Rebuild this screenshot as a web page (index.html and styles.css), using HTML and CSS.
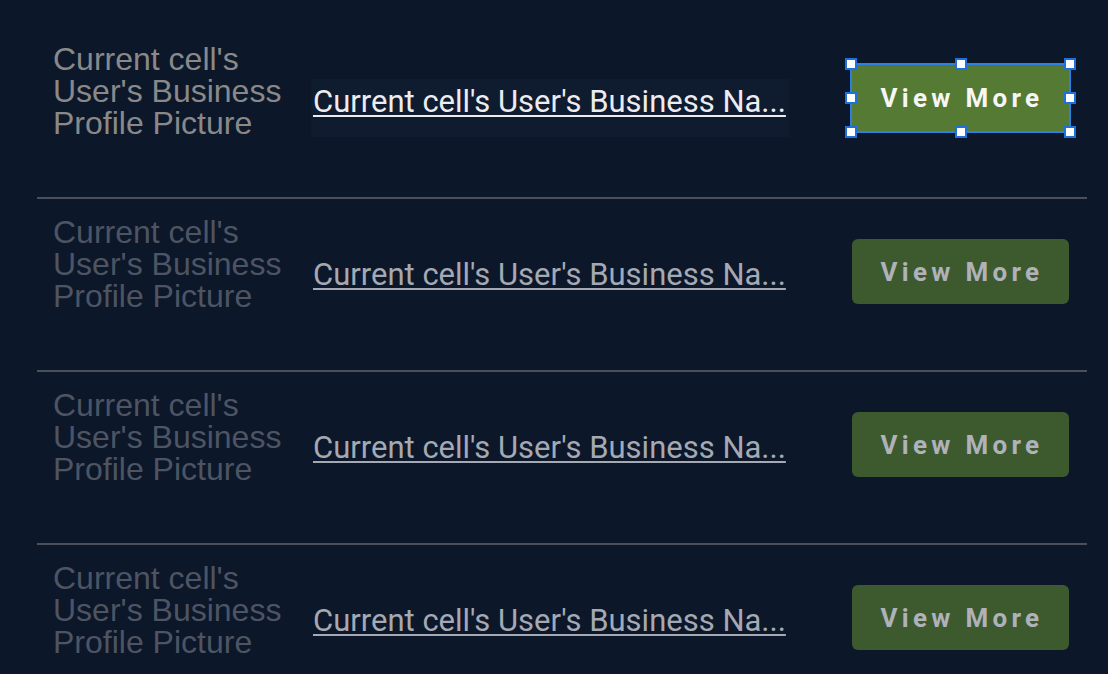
FILE: index.html
```html
<!DOCTYPE html>
<html>
<head>
<meta charset="utf-8">
<link rel="stylesheet" href="styles.css">
</head>
<body>
<div class="list">
  <div class="row">
    <div class="pic">Current cell's<br>User's Business<br>Profile Picture</div>
    <div class="name name-hl"><a class="link">Current cell's User's Business Na...</a></div>
    <div class="btn-wrap">
      <button class="btn">View More</button>
      <div class="sel"></div>
      <span class="h h-tl"></span><span class="h h-tc"></span><span class="h h-tr"></span>
      <span class="h h-ml"></span><span class="h h-mr"></span>
      <span class="h h-bl"></span><span class="h h-bc"></span><span class="h h-br"></span>
    </div>
  </div>
  <div class="row dim">
    <div class="pic">Current cell's<br>User's Business<br>Profile Picture</div>
    <div class="name"><a class="link">Current cell's User's Business Na...</a></div>
    <div class="btn-wrap"><button class="btn">View More</button></div>
  </div>
  <div class="row dim">
    <div class="pic">Current cell's<br>User's Business<br>Profile Picture</div>
    <div class="name"><a class="link">Current cell's User's Business Na...</a></div>
    <div class="btn-wrap"><button class="btn">View More</button></div>
  </div>
  <div class="row dim">
    <div class="pic">Current cell's<br>User's Business<br>Profile Picture</div>
    <div class="name"><a class="link">Current cell's User's Business Na...</a></div>
    <div class="btn-wrap"><button class="btn">View More</button></div>
  </div>
</div>
</body>
</html>
```
FILE: styles.css
```css
html, body {
  margin: 0;
  padding: 0;
  background: #0c1729;
  overflow: hidden;
}
body {
  padding-top: 26px;
  height: 674px;
  box-sizing: border-box;
}
.list {
  margin-left: 37px;
  width: 1050px;
}
.row {
  display: flex;
  align-items: flex-start;
  height: 171px;
  border-bottom: 2px solid #4a4f59;
}
.pic {
  width: 274px;
  box-sizing: border-box;
  padding-left: 16px;
  padding-top: 17px;
  font-family: "Liberation Sans", Arial, sans-serif;
  font-size: 32px;
  line-height: 32px;
  color: #898989;
  white-space: nowrap;
}
.name {
  width: 478px;
  height: 58px;
  margin-top: 53px;
  box-sizing: border-box;
  padding-left: 2px;
  padding-top: 4px;
}
.name-hl {
  background: #0f1b2e;
}
.link {
  font-family: Roboto, "Open Sans", sans-serif;
  font-size: 31px;
  color: #ececf0;
  text-decoration: underline;
  text-decoration-thickness: 2px;
  text-underline-offset: 3px;
  white-space: nowrap;
}
.btn-wrap {
  position: relative;
  margin-left: 63px;
  margin-top: 39px;
  width: 217px;
  height: 66px;
}
.btn {
  display: block;
  width: 217px;
  height: 66px;
  border: none;
  border-radius: 6px;
  background: #557a33;
  color: #f6f6f6;
  font-family: Roboto, sans-serif;
  font-weight: 700;
  font-size: 26px;
  letter-spacing: 4.3px;
  padding: 0 0 0 3px;
  margin: 0;
}
.sel {
  position: absolute;
  left: -2px;
  top: -2px;
  right: -2px;
  bottom: -2px;
  border: 2px solid #2e7fe3;
}
.h {
  position: absolute;
  width: 12px;
  height: 12px;
  box-sizing: border-box;
  background: #ffffff;
  border: 2px solid #1f6fdc;
}
.h-tl { left: -7px; top: -7px; }
.h-tc { left: calc(50% - 6px); top: -7px; }
.h-tr { right: -7px; top: -7px; }
.h-ml { left: -7px; top: calc(50% - 6px); }
.h-mr { right: -7px; top: calc(50% - 6px); }
.h-bl { left: -7px; bottom: -7px; }
.h-bc { left: calc(50% - 6px); bottom: -7px; }
.h-br { right: -7px; bottom: -7px; }

.dim .pic { color: #4d5463; }
.dim .link { color: #a4a9b3; }
.dim .btn-wrap { height: 65px; margin-top: 40px; }
.dim .btn {
  height: 65px;
  background: #3d5a2f;
  color: #afb2bb;
}
```
